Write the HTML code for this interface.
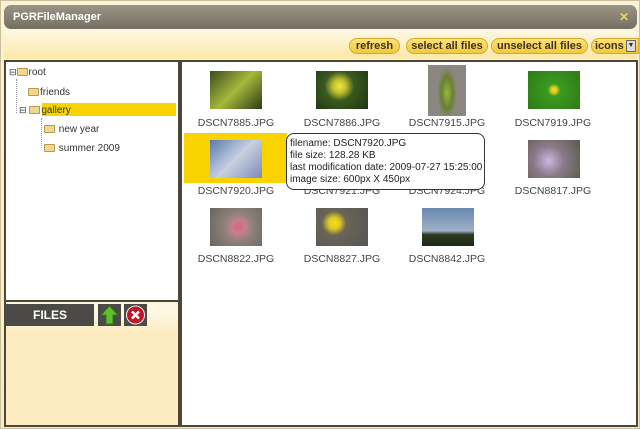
<!DOCTYPE html><html><head><style>
*{margin:0;padding:0;box-sizing:border-box}
body{width:640px;height:429px;background:#f3ead0;font-family:"Liberation Sans",sans-serif;position:relative;overflow:hidden}
.win{position:absolute;left:0;top:0;width:640px;height:429px;background:linear-gradient(#fbf3d8,#f8ecc4);border:1px solid #cbbf9c}
.title{position:absolute;left:3px;top:4px;width:633px;height:24px;border-radius:7px;background:linear-gradient(#9b9486,#756f62);color:#fff;font-weight:bold;font-size:11px;line-height:24px;padding-left:9px}
.title span{position:absolute;right:8px;top:0;color:#f0d060;font-size:12px}
.tb{position:absolute;top:28px;left:3px;width:633px;height:30px;background:linear-gradient(#fdf8e5,#fce8a8)}
.btn{position:absolute;top:37px;height:16px;border-radius:8px;background:linear-gradient(#fde37a,#f3c83a);border:1px solid #d5a92a;font-size:11px;font-weight:bold;color:#3d3322;line-height:14px;text-align:center}
.left{position:absolute;left:3px;top:59px;width:176px;height:367px;border:2px solid #4b4638;background:#fff}
.bot{position:absolute;left:0;top:238px;width:172px;height:125px;border-top:2px solid #4b4638;background:linear-gradient(#fdf6e0 0px,#fdf6e0 12px,#fcecc0 30px,#fcecc0)}
.right{position:absolute;left:178px;top:59px;width:459px;height:367px;border:2px solid #4b4638;border-left-width:3px;background:#fff}
.tree{position:absolute;font-size:10px;color:#333}
.f{display:inline-block;width:11px;height:8px;background:#f0d890;border:1px solid #b59a4c;border-radius:1px;vertical-align:-1px;margin-right:1px}
.it{position:absolute;width:106px;text-align:center;font-size:10.5px;color:#444}
.th{position:absolute}
</style></head><body><div class="win">
<div class="title">PGRFileManager<span>✕</span></div>
<div class="tb"></div>
<div class="btn" style="left:348px;width:51px">refresh</div>
<div class="btn" style="left:405px;width:82px">select all files</div>
<div class="btn" style="left:490px;width:97px">unselect all files</div>
<div class="btn" style="left:590px;width:48px;text-align:left;padding-left:3px;border-radius:8px 0 0 8px">icons<span style="position:absolute;right:2px;top:1px;width:10px;height:12px;background:#ddd;border:1px solid #666;font-size:7px;line-height:10px;text-align:center">▼</span></div>
<div class="left">
<div class="tree" style="left:3px;top:5px"><span style="font-size:9px">⊟</span><span class="f"></span>root</div>
<div style="position:absolute;left:10px;top:17px;height:34px;border-left:1px dotted #999"></div>
<div class="tree" style="left:22px;top:25px"><span class="f"></span>friends</div>
<div style="position:absolute;left:36px;top:41px;width:134px;height:13px;background:#f8d300"></div>
<div class="tree" style="left:13px;top:43px"><span style="font-size:9px">⊟</span> <span class="f"></span>gallery</div>
<div style="position:absolute;left:35px;top:56px;height:30px;border-left:1px dotted #999"></div>
<div class="tree" style="left:38px;top:62px"><span class="f"></span> new year</div>
<div class="tree" style="left:38px;top:81px"><span class="f"></span> summer 2009</div>
<div class="bot">
<div style="position:absolute;left:0;top:2px;width:88px;height:22px;background:#4b4a47;color:#fff;font-weight:bold;font-size:12px;line-height:22px;text-align:center">FILES</div>
<div style="position:absolute;left:92px;top:2px;width:23px;height:22px;background:#4b4a47"><svg width="23" height="22"><path d="M11.5 2 L20 11 L15 11 L15 20 L8 20 L8 11 L3 11Z" fill="#5fc02f" stroke="#2d7a15"/></svg></div>
<div style="position:absolute;left:118px;top:2px;width:23px;height:22px;background:#4b4a47"><svg width="23" height="22"><circle cx="11.5" cy="11" r="9" fill="#c0182a" stroke="#eee"/><path d="M8 7.5L15 14.5M15 7.5L8 14.5" stroke="#fff" stroke-width="2.5"/></svg></div>
</div></div>
<div class="right"></div>
<div style="position:absolute;left:183px;top:132px;width:103px;height:50px;background:#f8d300"></div>
<div class="th" style="left:209px;top:70px;width:52px;height:38px;background:linear-gradient(135deg,#3d4a20,#a6b83a 50%,#2d3a18)"></div>
<div class="th" style="left:315px;top:70px;width:52px;height:38px;background:radial-gradient(circle at 45% 40%,#e8e840 0,#c0c030 18%,#3a5a20 40%,#1f3312)"></div>
<div class="th" style="left:427px;top:64px;width:38px;height:51px;background:radial-gradient(ellipse 25% 50% at 50% 55%,#9ab840,#6a8030 60%,#8a8780 100%)"></div>
<div class="th" style="left:527px;top:70px;width:52px;height:38px;background:radial-gradient(circle at 50% 50%,#f0e020 0,#e0d020 8%,#3a9a20 20%,#2f7a18)"></div>
<div class="th" style="left:209px;top:139px;width:52px;height:38px;background:linear-gradient(135deg,#5a7ab0,#c8d0e0 50%,#7a8ab8)"></div>
<div class="th" style="left:527px;top:139px;width:52px;height:38px;background:radial-gradient(circle at 40% 55%,#c8b8e0,#8a7a8a 40%,#5a5a4a)"></div>
<div class="th" style="left:209px;top:207px;width:52px;height:38px;background:radial-gradient(circle at 55% 50%,#e06080,#c08090 20%,#8a8078 45%,#6a6460)"></div>
<div class="th" style="left:315px;top:207px;width:52px;height:38px;background:radial-gradient(circle at 35% 40%,#f0e020 0,#e0c820 14%,#6a6458 30%,#555)"></div>
<div class="th" style="left:421px;top:207px;width:52px;height:38px;background:linear-gradient(#6a88b0,#a0b0c8 60%,#2a3a20 70%,#1f2a18)"></div>
<div class="it" style="left:182px;top:116px">DSCN7885.JPG</div>
<div class="it" style="left:288px;top:116px">DSCN7886.JPG</div>
<div class="it" style="left:393px;top:116px">DSCN7915.JPG</div>
<div class="it" style="left:499px;top:116px">DSCN7919.JPG</div>
<div class="it" style="left:182px;top:184px">DSCN7920.JPG</div>
<div class="it" style="left:288px;top:184px">DSCN7921.JPG</div>
<div class="it" style="left:393px;top:184px">DSCN7924.JPG</div>
<div class="it" style="left:499px;top:184px">DSCN8817.JPG</div>
<div class="it" style="left:182px;top:252px">DSCN8822.JPG</div>
<div class="it" style="left:288px;top:252px">DSCN8827.JPG</div>
<div class="it" style="left:393px;top:252px">DSCN8842.JPG</div>
<div style="position:absolute;left:285px;top:132px;width:199px;height:57px;background:#fff;border:1px solid #333;border-radius:8px;font-size:10px;line-height:12px;padding:4px 0 0 3px;color:#222">filename: DSCN7920.JPG<br>file size: 128.28 KB<br>last modification date: 2009-07-27 15:25:00<br>image size: 600px X 450px</div>
</div></body></html>
